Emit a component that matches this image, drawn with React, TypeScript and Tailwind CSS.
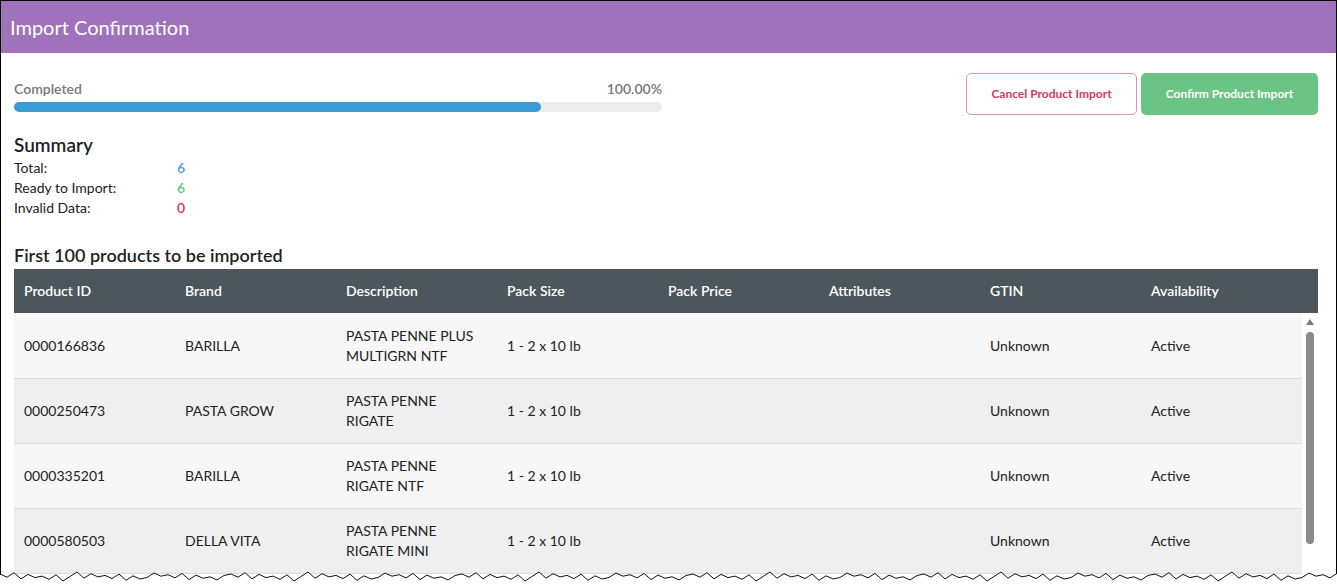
const columns = ["Product ID", "Brand", "Description", "Pack Size", "Pack Price", "Attributes", "GTIN", "Availability"]

const rows = [
  { id: "0000166836", brand: "BARILLA", desc: "PASTA PENNE PLUS MULTIGRN NTF" },
  { id: "0000250473", brand: "PASTA GROW", desc: "PASTA PENNE RIGATE" },
  { id: "0000335201", brand: "BARILLA", desc: "PASTA PENNE RIGATE NTF" },
  { id: "0000580503", brand: "DELLA VITA", desc: "PASTA PENNE RIGATE MINI" },
]

function TornEdge() {
  // jagged "torn paper" line at the bottom of the screenshot
  const pts: string[] = []
  let y = 6
  for (let x = 0; x <= 1337; x += 7) {
    y = 4 + ((x * 37) % 11) * 0.7 - (x % 3)
    pts.push(`${x},${y.toFixed(1)}`)
  }
  const line = pts.join(" ")
  return (
    <svg className="absolute bottom-0 left-0" width="1337" height="14" viewBox="0 0 1337 14">
      <polygon points={`0,14 ${line} 1337,14`} fill="#ffffff" />
      <polyline points={line} fill="none" stroke="#111" strokeWidth="1" />
    </svg>
  )
}

export default function App() {
  return (
    <div className="relative h-[584px] w-[1337px] overflow-hidden bg-white font-['Lato','Noto_Sans',sans-serif] text-[#222]">
      <div className="h-[584px] border-x border-t border-black">
        <div className="flex h-[52px] items-center bg-[#a072bc] px-[9px] text-[20px] text-white">
          Import Confirmation
        </div>

        <div className="pl-[13px] pr-[18px]">
          <div className="flex justify-between pt-[20px]">
            <div className="w-[648px] pt-[8px]">
              <div className="flex justify-between text-[14px] font-semibold leading-4 text-[#777]">
                <span>Completed</span>
                <span>100.00%</span>
              </div>
              <div className="mt-[5px] h-[10px] rounded-full bg-[#ececec]">
                <div className="h-full w-[81.3%] rounded-full bg-[#3d9bd4]" />
              </div>
            </div>
            <div className="flex gap-[4px]">
              <button className="h-[42px] w-[171px] rounded-[5px] border border-[#ea8fa7] bg-white text-[12px] font-bold text-[#d23a64]">
                Cancel Product Import
              </button>
              <button className="h-[42px] w-[177px] rounded-[5px] bg-[#6cc386] text-[12px] font-bold text-white">
                Confirm Product Import
              </button>
            </div>
          </div>

          <div className="mt-[18px] text-[19px] font-semibold leading-6 text-[#1f1f1f]">Summary</div>
          <div className="pt-[1px] text-[14px] leading-5">
            <div className="flex">
              <span className="w-[163px]">Total:</span>
              <span className="font-semibold text-[#4d9fd6]">6</span>
            </div>
            <div className="flex">
              <span className="w-[163px]">Ready to Import:</span>
              <span className="font-semibold text-[#6cc386]">6</span>
            </div>
            <div className="flex">
              <span className="w-[163px]">Invalid Data:</span>
              <span className="font-semibold text-[#d23a5c]">0</span>
            </div>
          </div>

          <div className="mt-[25px] mb-[2px] text-[18px] font-semibold leading-6 text-[#1f1f1f]">
            First 100 products to be imported
          </div>

          <div className="w-[1304px]">
            <div className="flex h-[44px] items-center pb-[1px] bg-[#4c575d] text-[14px] font-semibold text-white">
              {columns.map((c) => (
                <div key={c} className="w-[161px] pl-[10px]">
                  {c}
                </div>
              ))}
            </div>
            <div className="flex">
              <div className="w-[1288px]">
                {rows.map((r, i) => (
                  <div
                    key={r.id}
                    className={`flex items-center border-b border-[#dcdcdc] text-[14px] leading-5 ${
                      i === 0 ? "h-[66px]" : "h-[65px]"
                    } ${i % 2 === 0 ? "bg-[#f7f7f7]" : "bg-[#efefef]"}`}
                  >
                    <div className="w-[161px] pl-[10px]">{r.id}</div>
                    <div className="w-[161px] pl-[10px]">{r.brand}</div>
                    <div className="w-[161px] pl-[10px] pr-[22px]">{r.desc}</div>
                    <div className="w-[161px] pl-[10px]">1 - 2 x 10 lb</div>
                    <div className="w-[161px] pl-[10px]" />
                    <div className="w-[161px] pl-[10px]" />
                    <div className="w-[161px] pl-[10px]">Unknown</div>
                    <div className="w-[161px] pl-[10px]">Active</div>
                  </div>
                ))}
              </div>
              <div className="flex w-[16px] flex-col items-center bg-white pt-[6px]">
                <svg width="8" height="6" viewBox="0 0 8 6">
                  <polygon points="4,0 8,6 0,6" fill="#7a7a7a" />
                </svg>
                <div className="mt-[7px] h-[212px] w-[8px] rounded-full bg-[#8a8a8a]" />
              </div>
            </div>
          </div>
        </div>
      </div>
      <TornEdge />
    </div>
  )
}
